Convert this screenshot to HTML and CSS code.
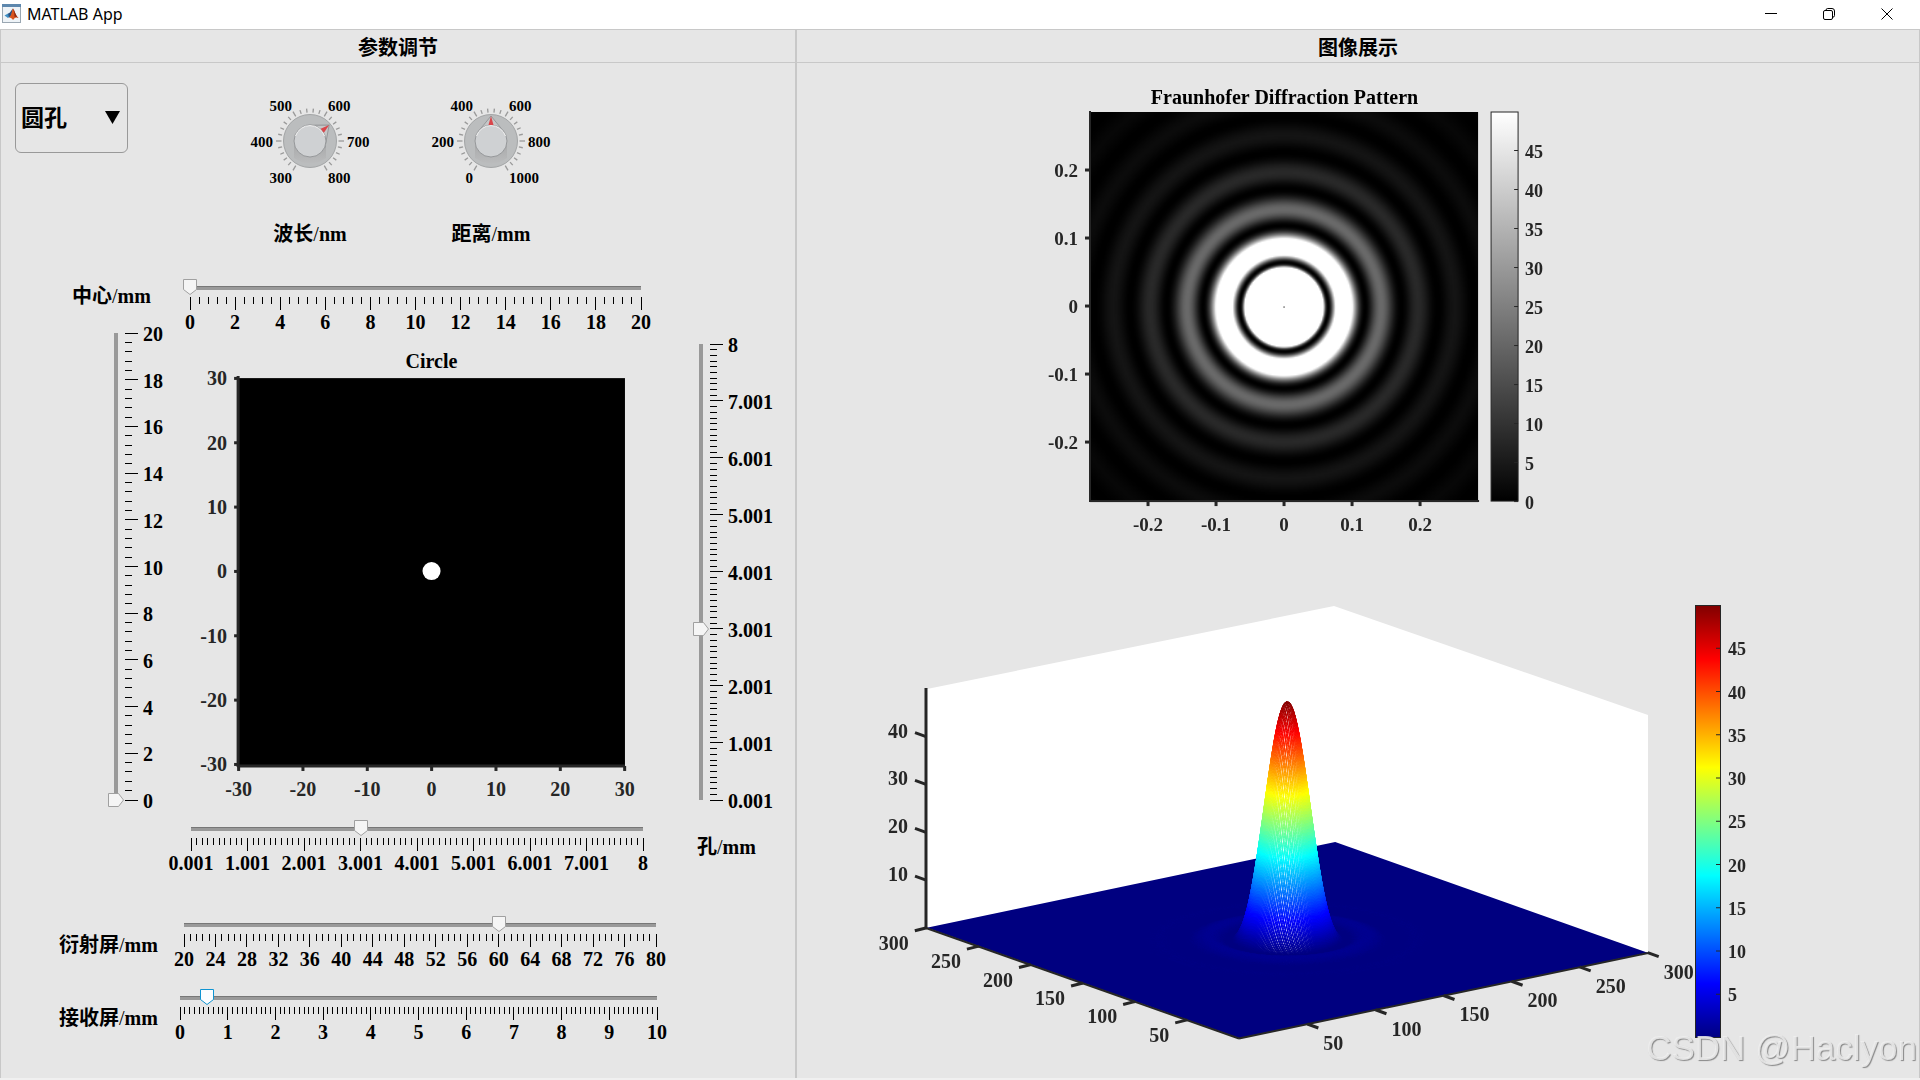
FILE: index.html
```html
<!DOCTYPE html>
<html lang="zh-CN">
<head>
<meta charset="utf-8">
<title>MATLAB App</title>
<link rel="stylesheet" href="styles.css">
</head>
<body>
<header class="titlebar">
  <svg class="app-icon" viewBox="0 0 20 20" aria-hidden="true">
    <rect x="0.5" y="0.5" width="18" height="18" fill="#eef3f7" stroke="#9aa7b2"/>
    <rect x="0" y="0" width="19" height="3" fill="#5d87ad"/>
    <path d="M2.500 11.500 6 9.500 8.500 12 6 14Z" fill="#3f8fc4"/>
    <path d="M6 9.500 C8.500 9 9.500 5.500 11 4.500 L9.500 11.500 7 13.500Z" fill="#27507f"/>
    <path d="M11 4.500 C12.500 6 13.500 11.500 16.500 14 C14.500 13 13 13 11 16 C10 14.500 9 13.500 7 13.500 C9.500 12 10 6 11 4.500Z" fill="#d9541e"/>
    <path d="M11 4.500 C12.500 6 13.500 11.500 16.500 14 C14.500 13 13.500 12.500 12.500 13 C12.500 10 12 7 11 4.500Z" fill="#8c2a12"/>
  </svg>
  <h1 class="app-name">MATLAB App</h1>
  <div class="window-buttons">
    <button class="window-button" type="button" aria-label="Minimize"><svg viewBox="0 0 12 12"><path d="M0 5.500H12"/></svg></button>
    <button class="window-button" type="button" aria-label="Restore"><svg viewBox="0 0 12 12"><rect x="0.500" y="2.500" width="9" height="9" rx="1.500"/><path d="M3 2.500V2.200Q3 0.500 4.700 0.500H9Q11.500 0.500 11.500 3V7.500Q11.500 9.200 9.700 9.200"/></svg></button>
    <button class="window-button" type="button" aria-label="Close"><svg viewBox="0 0 12 12"><path d="M0.500 0.500 11.500 11.500M11.500 0.500 0.500 11.500"/></svg></button>
  </div>
</header>

<main class="panels">
  <section class="panel">
    <h2 class="panel-title">参数调节</h2>
    <div class="panel-body">
      <div class="top-controls">
        <select class="shape-select" aria-label="孔形"><option>圆孔</option></select>
        <div class="knobs">
          <div class="knob">
            <svg class="knob-dial" viewBox="-65 -58 130 116" role="slider" tabindex="0" aria-labelledby="wave-label" aria-valuemin="300" aria-valuemax="800" aria-valuenow="633" data-labels="300,400,500,600,700,800" data-angle="50"></svg>
            <span class="caption" id="wave-label">波长<span class="slash">/</span>nm</span>
          </div>
          <div class="knob">
            <svg class="knob-dial" viewBox="-65 -58 130 116" role="slider" tabindex="0" aria-labelledby="dist-label" aria-valuemin="0" aria-valuemax="1000" aria-valuenow="500" data-labels="0,200,400,600,800,1000" data-angle="0"></svg>
            <span class="caption" id="dist-label">距离<span class="slash">/</span>mm</span>
          </div>
        </div>
      </div>

      <div class="slider-row center-row">
        <label class="caption row-label" for="center-x">中心<span class="slash">/</span>mm</label>
        <div class="slider">
          <input class="range" id="center-x" type="range" min="0" max="20" step="0.1" value="0">
          <svg class="scale" data-min="0" data-max="20" data-step="2" data-parts="5"></svg>
        </div>
      </div>

      <div class="aperture">
        <div class="vslider vslider-left">
          <input class="range range-vertical" type="range" min="0" max="20" step="0.1" value="0" aria-label="中心/mm">
          <svg class="scale scale-vertical" data-min="0" data-max="20" data-step="2" data-parts="5"></svg>
        </div>
        <div class="aperture-center">
          <svg class="plot" id="circle-plot" viewBox="192 326 451 493"></svg>
          <div class="slider">
            <input class="range" type="range" min="0.001" max="8" step="0.001" value="3.001" aria-label="孔/mm">
            <svg class="scale" data-min="0.001" data-max="8" data-step="1" data-parts="10"></svg>
          </div>
        </div>
        <div class="aperture-right">
          <div class="vslider">
            <input class="range range-vertical" id="hole" type="range" min="0.001" max="8" step="0.001" value="3.001">
            <svg class="scale scale-vertical" data-min="0.001" data-max="8" data-step="1" data-parts="10"></svg>
          </div>
          <label class="caption" for="hole">孔<span class="slash">/</span>mm</label>
        </div>
      </div>

      <div class="slider-row screen-row">
        <label class="caption row-label low-label" for="screen-a">衍射屏<span class="slash">/</span>mm</label>
        <div class="slider">
          <input class="range" id="screen-a" type="range" min="20" max="80" step="0.1" value="60">
          <svg class="scale" data-min="20" data-max="80" data-step="4" data-parts="5"></svg>
        </div>
      </div>
      <div class="slider-row receiver-row">
        <label class="caption row-label low-label" for="screen-b">接收屏<span class="slash">/</span>mm</label>
        <div class="slider">
          <input class="range range-active" id="screen-b" type="range" min="0" max="10" step="0.01" value="0.56">
          <svg class="scale" data-min="0" data-max="10" data-step="1" data-parts="10"></svg>
        </div>
      </div>
    </div>
  </section>

  <section class="panel">
    <h2 class="panel-title">图像展示</h2>
    <div class="panel-body">
      <div class="pattern-area">
        <svg class="plot" id="pattern-plot" viewBox="1030 73 540 480">
          <foreignObject x="1090" y="112" width="388" height="390"><canvas class="pattern-canvas" id="pattern" width="301" height="301"></canvas></foreignObject>
        </svg>
      </div>
      <div class="surface-area">
        <svg class="plot" id="surface-plot" viewBox="860 590 920 470">
          <path d="M927 928V689L1334 606 1648 715V953L1334 844Z" fill="#fff"/>
          <foreignObject x="920" y="590" width="740" height="460"><canvas class="surface-canvas" id="surface" width="740" height="460"></canvas></foreignObject>
        </svg>
      </div>
    </div>
  </section>
</main>
<div class="watermark">CSDN @Haclyon</div>
<script src="app.js"></script>
</body>
</html>
```
FILE: styles.css
```css
* { box-sizing: border-box; }

body {
  margin: 0;
  min-height: 100vh;
  display: flex;
  flex-direction: column;
  background: #f0f0f0;
  color: #000;
  font-family: "Liberation Serif", "Noto Sans CJK SC", serif;
  font-size: 20px;
  font-weight: 700;
  position: relative;
  overflow-x: hidden;
}

.titlebar {
  height: 29px;
  padding: 0 4px 0 2px;
  display: flex;
  align-items: flex-start;
  background: #fff;
}
.app-icon { width: 20px; height: 20px; margin-top: 4px; }
.app-name {
  margin: 0 auto 0 5px;
  font: 400 16px/28px "Noto Sans", "Open Sans", sans-serif;
}
.window-buttons { display: flex; }
.window-button {
  width: 58px;
  height: 28px;
  padding: 0;
  border: 0;
  background: none;
  display: flex;
  align-items: center;
  justify-content: center;
}
.window-button svg { width: 12px; height: 12px; fill: none; stroke: #000; }

.panels {
  flex: 1;
  display: grid;
  grid-template-columns: 796fr 1124fr;
  margin-bottom: 2px;
}
.panel {
  background: #e6e6e6;
  box-shadow: inset 1px 1px #c8c8c8, inset -1px 0 #c8c8c8;
}
.panel-title {
  height: 34px;
  margin: 0;
  border-bottom: 1px solid #c8c8c8;
  font: 700 20px/36px "Noto Sans CJK SC", sans-serif;
  text-align: center;
}
.caption { line-height: 28px; white-space: nowrap; }
.slash { font-weight: 400; }

.top-controls {
  display: flex;
  align-items: flex-start;
  padding: 20px 0 0 15px;
  gap: 117px;
}
.shape-select {
  width: 113px;
  height: 70px;
  padding: 0 5px 4px;
  appearance: none;
  border: 1px solid #999;
  border-radius: 6px;
  color: #000;
  font: 700 23px "Noto Sans CJK SC", sans-serif;
  background: url("data:image/svg+xml,%3Csvg xmlns='http://www.w3.org/2000/svg' width='15' height='13'%3E%3Cpath d='M0 0H15L7.500 13Z'/%3E%3C/svg%3E") no-repeat right 7px top 27px #e6e6e6;
}
.knobs { display: flex; gap: 51px; }
.knob { display: flex; flex-direction: column; align-items: center; gap: 21px; }
.knob-dial { width: 130px; height: 116px; font-size: 15px; }

.slider-row { display: grid; }
.center-row { grid-template-columns: 190fr 451fr 155fr; margin-top: 31px; }
.screen-row { grid-template-columns: 184fr 472fr 140fr; margin-top: 49px; }
.receiver-row { grid-template-columns: 180fr 477fr 139fr; margin-top: 26px; }
.row-label { line-height: 34px; padding-left: 72px; }
.low-label { padding-left: 59px; margin-top: 12px; height: 34px; }

.slider { display: flex; flex-direction: column; gap: 2px; height: 47px; }
.range {
  appearance: none;
  width: calc(100% + 14px);
  height: 16px;
  margin: 0 -7px;
  background: linear-gradient(#777 1px, #999 1px) no-repeat center 7px / calc(100% - 14px) 4px;
}
.range::-webkit-slider-thumb {
  appearance: none;
  width: 14px;
  height: 16px;
  background: url("data:image/svg+xml,%3Csvg xmlns='http://www.w3.org/2000/svg' width='14' height='16'%3E%3Cpath d='M.5 .5H13.500V10.500L7 15.500L.5 10.500Z' fill='%23f5f5f5' stroke='%23a0a0a0'/%3E%3C/svg%3E");
}
.range-active::-webkit-slider-thumb {
  background: url("data:image/svg+xml,%3Csvg xmlns='http://www.w3.org/2000/svg' width='14' height='16'%3E%3Cpath d='M.5 .5H13.500V10.500L7 15.500L.5 10.500Z' fill='%23fbfdff' stroke='%230f94d2'/%3E%3C/svg%3E");
}
.scale { width: 100%; height: 29px; overflow: visible; }
.scale line { stroke: #000; shape-rendering: crispEdges; }

.vslider { display: flex; gap: 1px; height: 481px; }
.vslider-left { padding-left: 108px; }
.range-vertical {
  writing-mode: vertical-lr;
  direction: rtl;
  width: 16px;
  height: 100%;
  margin: 0;
  background: linear-gradient(#999, #999) no-repeat 6px center / 4px calc(100% - 14px);
}
.range-vertical::-webkit-slider-thumb {
  width: 16px;
  height: 14px;
  background: url("data:image/svg+xml,%3Csvg xmlns='http://www.w3.org/2000/svg' width='16' height='14'%3E%3Cpath d='M.5 .5H10.500L15.500 7L10.500 13.500H.5Z' fill='%23f5f5f5' stroke='%23a0a0a0'/%3E%3C/svg%3E");
}
.scale-vertical { width: 56px; height: calc(100% - 14px); margin: 7px 0; }

.aperture { display: grid; grid-template-columns: 191fr 452fr 153fr; }
.aperture-right { padding-left: 50px; }
.aperture-right .vslider { height: 470px; margin: 11px 0 26px; }
.aperture-right .caption { padding-left: 4px; }

.plot { display: block; width: 100%; overflow: visible; fill: #262626; }
.plot line { stroke: #262626; stroke-width: 3; }
.plot .thin { stroke-width: 1; }
.plot .frame { fill: none; stroke: #262626; }
.plot .plot-title { fill: #000; }
.label-19 { font-size: 19px; }
.label-18 { font-size: 18px; }
.pattern-canvas { display: block; width: 388px; height: 390px; }
.surface-canvas { display: block; }

.pattern-area { padding: 10px 31.13% 37px 20.82%; }
.surface-area { padding: 0 12.45% 0 5.7%; }

.watermark {
  position: absolute;
  right: 3px;
  bottom: 12px;
  font: 400 35px/40px "Liberation Sans", sans-serif;
  color: rgba(240, 240, 240, 0.85);
  text-shadow: 1px 1px 1px #888;
}
```
FILE: app.js
```js
const NS = 'http://www.w3.org/2000/svg';

function add(parent, tag, attrs, text) {
  const node = document.createElementNS(NS, tag);
  for (const key in attrs) node.setAttribute(key, attrs[key]);
  if (text !== undefined) node.textContent = text;
  parent.appendChild(node);
  return node;
}
function line(svg, x1, y1, x2, y2, cls) {
  return add(svg, 'line', { x1, y1, x2, y2, class: cls || '' });
}
function label(svg, x, y, text, anchor, cls) {
  add(svg, 'text', { x, y, 'text-anchor': anchor || 'middle', class: cls || '' }, text);
}

// Slider scales
document.querySelectorAll('.scale').forEach(svg => {
  const min = +svg.dataset.min, max = +svg.dataset.max;
  const step = +svg.dataset.step, parts = +svg.dataset.parts;
  const vertical = svg.classList.contains('scale-vertical');
  const count = Math.round((max - min) / step * parts);
  for (let i = 0; i <= count; i++) {
    const value = Math.min(max, min + i * step / parts);
    const major = i % parts === 0;
    const part = (value - min) / (max - min) * 100;
    const length = major ? 13 : 7;
    if (vertical) {
      const y = 100 - part + '%';
      line(svg, 0, y, length, y);
      if (major) add(svg, 'text', { x: 18, y, dy: 8 }, String(+value.toFixed(3)));
    } else {
      const x = part + '%';
      line(svg, x, 0, x, length);
      if (major) label(svg, x, 32, String(+value.toFixed(3)));
    }
  }
});

// Knobs
document.querySelectorAll('.knob-dial').forEach((svg, n) => {
  const defs = add(svg, 'defs', {});
  const shade = add(defs, 'linearGradient', { id: 'shade' + n, x1: 0, y1: 0, x2: 0, y2: 1 });
  add(shade, 'stop', { offset: 0, 'stop-color': '#a6a7a8' });
  add(shade, 'stop', { offset: 1, 'stop-color': '#bbbcbd' });
  for (let a = -150; a <= 150; a += 12) {
    const major = (a + 150) % 60 === 0;
    add(svg, 'line', { x1: 0, x2: 0, y1: -28.5, y2: major ? -34 : -32.5, stroke: '#999', 'stroke-width': 1.3, transform: `rotate(${a})` });
  }
  add(svg, 'circle', { r: 26.5, fill: '#bbbdbe', stroke: '#a3a5a6' });
  add(svg, 'path', { d: 'M-16 0V17Q0 28 16 17V0Z', fill: `url(#shade${n})` });
  const hand = add(svg, 'g', { transform: `rotate(${svg.dataset.angle})` });
  add(hand, 'path', { d: 'M-14 -8 0 -25 14 -8Z', fill: '#c5c7c8', stroke: '#96989a' });
  add(svg, 'circle', { r: 16, fill: '#cfd1d3', stroke: '#96989a' });
  add(svg, 'path', { d: 'M-14.500 -5A15.300 15.300 0 0 1 14.500 -5', fill: 'none', stroke: '#f2f2f2' });
  const tip = add(svg, 'g', { transform: `rotate(${svg.dataset.angle})` });
  add(tip, 'path', { d: 'M-2.500 -16 0 -25 2.500 -16Z', fill: '#d9464b' });
  const spots = [[-18, 42, 'end'], [-37, 6, 'end'], [-18, -30, 'end'], [18, -30, 'start'], [37, 6, 'start'], [18, 42, 'start']];
  svg.dataset.labels.split(',').forEach((text, i) => label(svg, spots[i][0], spots[i][1], text, spots[i][2]));
});

// Aperture plot
(function () {
  const svg = document.getElementById('circle-plot');
  add(svg, 'rect', { x: 239, y: 378, width: 386, height: 387, fill: '#000' });
  add(svg, 'circle', { cx: 432, cy: 570.5, r: 9, fill: '#fff' });
  line(svg, 239, 376, 239, 766);
  line(svg, 238, 765, 625, 765);
  for (let i = 0; i <= 6; i++) {
    const v = -30 + i * 10, x = 239.5 + i * 64.2, y = 763.5 - i * 64.2;
    line(svg, x, 765, x, 770);
    line(svg, 235, y, 239, y);
    label(svg, x, 795, v);
    label(svg, 228, y + 7, v, 'end');
  }
  label(svg, 432, 368, 'Circle', 'middle', 'plot-title');
})();

// Airy intensity, tabulated against the Bessel argument
function besselJ1(x) {
  let sum = 0;
  for (let k = 0; k < 120; k++) {
    const t = (k + 0.5) * Math.PI / 120;
    sum += Math.cos(t - x * Math.sin(t));
  }
  return sum / 120;
}
const table = [];
for (let i = 0; i <= 2600; i++) {
  const x = i / 100;
  table.push(i === 0 ? 1 : Math.pow(2 * besselJ1(x) / x, 2));
}
const airy = x => {
  const i = Math.floor(x * 100), f = x * 100 - i;
  return table[i] * (1 - f) + table[i + 1] * f;
};
const K = 3.8317 / 34.3;

function jetChannels(t) {
  const c = v => Math.round(255 * Math.max(0, Math.min(1, 1.5 - Math.abs(v))));
  return [c(4 * t - 3), c(4 * t - 2), c(4 * t - 1)];
}
function jet(t, white = 0) {
  return `rgb(${jetChannels(t).map(v => Math.round(v + (255 - v) * white)).join(',')})`;
}

// Diffraction pattern
(function () {
  const ctx = document.getElementById('pattern').getContext('2d');
  const img = ctx.createImageData(301, 301);
  for (let y = 0; y < 301; y++) for (let x = 0; x < 301; x++) {
    const r = Math.hypot(x - 150, y - 150);
    let v = Math.min(255, 255 * 100 * airy(r * K));
    if (r === 0) v = 60;
    const p = (y * 301 + x) * 4;
    img.data[p] = img.data[p + 1] = img.data[p + 2] = v;
    img.data[p + 3] = 255;
  }
  ctx.putImageData(img, 0, 0);

  const svg = document.getElementById('pattern-plot');
  line(svg, 1090, 111, 1090, 502).style.strokeWidth = 2;
  line(svg, 1089, 501, 1479, 501).style.strokeWidth = 2;
  for (let i = -2; i <= 2; i++) {
    const x = 1284 + i * 68, y = 306 - i * 68, text = String(i / 10);
    line(svg, x, 501, x, 506);
    line(svg, 1085, y, 1090, y);
    label(svg, x, 531, text, 'middle', 'label-19');
    label(svg, 1078, y + 7, text, 'end', 'label-19');
  }
  label(svg, 1284.5, 104, 'Fraunhofer Diffraction Pattern', 'middle', 'plot-title');

  const g = add(svg, 'linearGradient', { id: 'gray', x1: 0, y1: 0, x2: 0, y2: 1 });
  add(g, 'stop', { offset: 0, 'stop-color': '#fff' });
  add(g, 'stop', { offset: 1, 'stop-color': '#000' });
  add(svg, 'rect', { x: 1491, y: 112, width: 27, height: 389, fill: 'url(#gray)' });
  add(svg, 'rect', { x: 1491, y: 112, width: 27, height: 389, class: 'frame' });
  for (let v = 0; v <= 45; v += 5) {
    const y = 501.5 - v * 7.8;
    line(svg, 1514, y, 1518, y, 'thin');
    label(svg, 1525, y + 7, v, 'start', 'label-18');
  }
})();

// Mesh surface
(function () {
  const ctx = document.getElementById('surface').getContext('2d');
  ctx.translate(-920, -590);
  const px = (i, j) => 1239.3 + 1.3613 * i - 1.0417 * j;
  const py = (i, j, z) => 1038.3 - 0.2853 * i - 0.3687 * j - 4.785 * z;
  const height = (i, j) => 49.8 * airy(Math.hypot(i - 150, j - 150) * K);

  ctx.fillStyle = jet(0);
  ctx.beginPath();
  ctx.moveTo(px(0, 0), py(0, 0, 0));
  ctx.lineTo(px(300, 0), py(300, 0, 0));
  ctx.lineTo(px(300, 300), py(300, 300, 0));
  ctx.lineTo(px(0, 300), py(0, 300, 0));
  ctx.fill();

  function edge(x1, y1, z1, x2, y2, z2) {
    const n = Math.max(1, Math.ceil(Math.abs(z2 - z1) / 0.7));
    for (let k = 0; k < n; k++) {
      const a = k / n, b = (k + 1) / n;
      ctx.strokeStyle = jet((z1 + (z2 - z1) * (a + b) / 2) / 50);
      ctx.beginPath();
      ctx.moveTo(x1 + (x2 - x1) * a, y1 + (y2 - y1) * a);
      ctx.lineTo(x1 + (x2 - x1) * b, y1 + (y2 - y1) * b);
      ctx.stroke();
    }
  }
  ctx.lineWidth = 1.4;
  for (let i = 229; i >= 70; i--) for (let j = 229; j >= 70; j--) {
    const c = [[i, j], [i + 1, j], [i + 1, j + 1], [i, j + 1]].map(([a, b]) => {
      const z = height(a, b);
      return [px(a, b), py(a, b, z), z];
    });
    const zs = c.map(p => p[2]);
    const middle = (c[0][0] + c[2][0]) / 2 - 1285;
    const reach = 10 + (50 - zs[0]) * 0.42;
    const gap = Math.max(0, 1 - Math.pow(middle / reach, 2));
    const steep = Math.min(1, (Math.max(...zs) - Math.min(...zs)) / 0.5);
    ctx.fillStyle = jet(zs[0] / 50, gap * steep);
    ctx.beginPath();
    c.forEach((p, k) => k ? ctx.lineTo(p[0], p[1]) : ctx.moveTo(p[0], p[1]));
    ctx.closePath();
    ctx.fill();
    for (let k = 0; k < 4; k++) edge(...c[k], ...c[(k + 1) % 4]);
  }

  const svg = document.getElementById('surface-plot');
  line(svg, 926, 688, 926, 929);
  line(svg, 926, 928, 1239, 1038.5).style.strokeWidth = 2;
  line(svg, 1239, 1038.5, 1648, 953).style.strokeWidth = 2;
  for (let k = 1; k <= 4; k++) {
    const y = 928 - k * 47.85;
    line(svg, 915, y - 4, 926, y);
    label(svg, 908, y + 1, k * 10, 'end');
  }
  for (let k = 1; k <= 6; k++) {
    const x = 1239.3 - k * 52.08, y = 1038.3 - k * 18.43;
    line(svg, x - 12, y + 3, x, y);
    label(svg, x - 18, y + 22, k * 50, 'end');
    const u = 1239.3 + k * 68.07, w = 1038.3 - k * 14.27;
    line(svg, u, w, u + 11, w + 4);
    label(svg, u + 16, w + 26, k * 50, 'start');
  }

  const g = add(svg, 'linearGradient', { id: 'jet', x1: 0, y1: 1, x2: 0, y2: 0 });
  for (let i = 0; i <= 32; i++) add(g, 'stop', { offset: i / 32, 'stop-color': jet(i / 32) });
  add(svg, 'rect', { x: 1695, y: 605, width: 26, height: 433, fill: 'url(#jet)' });
  add(svg, 'rect', { x: 1695.5, y: 605.5, width: 25, height: 432, class: 'frame' });
  for (let v = 5; v <= 45; v += 5) {
    const y = 1037.5 - v * 8.65;
    line(svg, 1716, y, 1720, y, 'thin');
    label(svg, 1728, y + 7, v, 'start', 'label-18');
  }
})();
```
